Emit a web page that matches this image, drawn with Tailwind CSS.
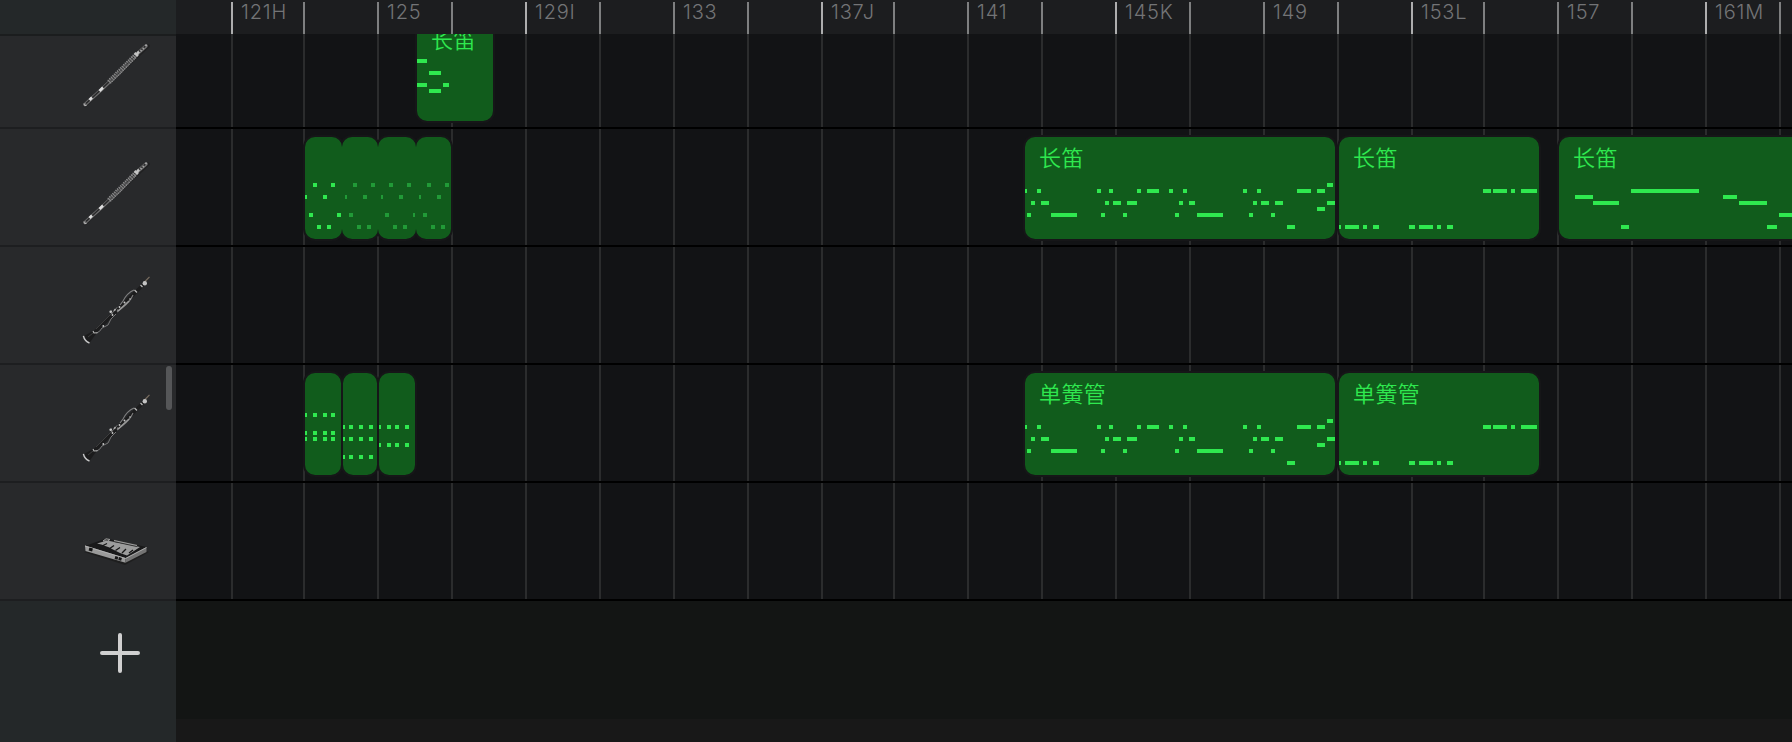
<!DOCTYPE html>
<html lang="zh-CN">
<head>
<meta charset="utf-8">
<title>Tracks</title>
<script src="https://cdn.jsdelivr.net/npm/@tailwindcss/browser@4"></script>
</head>
<body class="bg-[#121315] overflow-hidden">
<svg class="hidden">
  <symbol id="flute" viewBox="0 0 72 72">
    <path d="M5 65.5 68 6" stroke="#1b1b1c" stroke-width="3.5" stroke-linecap="round" opacity=".6"/>
    <path d="M5 64.5 21 50 40 32 57 14 66 6" stroke="#6c6c6d" stroke-width="3.6" fill="none" stroke-linecap="round"/>
    <path d="M6 63.5 21 49.5 40 31.500 57 13.500 66 5.500" stroke="#29292a" stroke-width="1.600" fill="none"/>
    <path d="M29 42 55 16" stroke="#8c8c8d" stroke-width="5" stroke-dasharray="1.200 1"/>
    <path d="M31 40.500 54 17.500" stroke="#4a4a4b" stroke-width="2.300" stroke-dasharray="1.500 1.200"/>
    <path d="M19.500 51 23 47.500M9.500 60 12 57.500" stroke="#dedede" stroke-width="2.600"/>
    <path d="M54.500 13 58 16M57 14 59 11.500" stroke="#c4c4c4" stroke-width="2.500"/>
    <path d="M60.500 11 65 7" stroke="#a0a0a0" stroke-width="2" stroke-dasharray="1.500 1.500"/>
    <circle cx="66" cy="5.500" r="1" fill="#aaa"/>
    <path d="M4 63.500Q4 66.500 6.500 65.500" stroke="#b4b4b4" fill="none"/>
  </symbol>
  <symbol id="clarinet" viewBox="0 0 72 72">
    <path d="M7 64 15 56 63 9" stroke="#1c1c1d" stroke-width="3.400" fill="none"/>
    <path d="M4 60 14 54.500 16.500 57 9.500 67Z" fill="#1b1b1c"/>
    <path d="M16 53 34 35M13 57 8 61" stroke="#4b4b4b" stroke-width=".7"/>
    <path d="M64 6.500 69.500 .8" stroke="#796d60" stroke-width="1.200"/>
    <circle cx="64.800" cy="7.300" r="2.200" fill="#c4c4c4"/>
    <path d="M60.500 9 62.500 11M54.500 14 57 16.500" stroke="#b8b8b8" stroke-width="1.300"/>
    <path d="M54 14Q47 17 43 25L40 29M53 19Q50 26 42 32L37 36" stroke="#7e7e7f" stroke-width="1.100" fill="none"/>
    <path d="M16.500 57Q20 56 22 52L28 49 31 43 36 38" stroke="#777778" stroke-width="1" fill="none"/>
    <path d="M38 35 49 25" stroke="#9c9c9c" stroke-width="1.400"/>
    <path d="M30 35.500 38 34M31.500 38 37 31.500" stroke="#a5a5a5" stroke-width="1" stroke-dasharray="2 1.500"/>
    <g fill="#cacaca"><circle cx="30.700" cy="35.700" r="1.300"/><circle cx="32.500" cy="39" r=".9"/><circle cx="35" cy="33.500" r=".8"/><circle cx="39.500" cy="31" r=".9"/><circle cx="44.500" cy="26.500" r="1"/><circle cx="50" cy="23" r=".8"/><circle cx="23.300" cy="50" r=".9"/></g>
    <path d="M13 55 14 57 17.500 56.800" stroke="#bdbdbd" stroke-width="1.100" fill="none"/>
    <path d="M3.400 59.800Q4.500 65 9.500 67" stroke="#c8c8c8" stroke-width="1.400" fill="none"/>
  </symbol>
  <symbol id="synth" viewBox="0 0 72 72">
    <path d="M4 40 45 53 69 40 60 36Z" fill="#19191a" opacity=".7"/>
    <path d="M5 34 26 26.500 66.500 35 45.500 46.500Z" fill="#19191a"/>
    <path d="M5 33.500 45.500 46V50.800L5.500 39Z" fill="#9a9a9a"/>
    <path d="M45.500 46 66.500 35V40L45.500 50.800Z" fill="#747474"/>
    <path d="M5 34 45.500 46.500 66.500 35.500" fill="none" stroke="#b9b9b9" stroke-width=".8"/>
    <path d="M17 31.500 27 28.500 60 35 47 43.500Q39 41 32 37 26 33.500 17 31.500Z" fill="#9c9c9c"/>
    <path d="M22 34 27 31.500M29 37 34 33.500M35.500 38.500 40 35.500M42 41 46 37M49 41 53 38" stroke="#161616" stroke-width="1.300"/>
    <path d="M34 28.800 57 33.800" stroke="#333" stroke-width="2.600"/>
    <path d="M34 28.500 57 33.500" stroke="#a0a0a0" stroke-width="1.200"/>
    <path d="M23 29 26 26.800 30 27.500 27.500 29Z" fill="#292929" stroke="#a0a0a0"/>
    <path d="M9 37 12.500 38" stroke="#111" stroke-width="3"/>
    <path d="M35 45.500 42 47.500" stroke="#151515" stroke-width="3" stroke-dasharray="3 .8"/>
  </symbol>
</svg>

<div class="flex w-[1792px] h-[742px] overflow-hidden">
  <aside class="relative w-[176px] shrink-0 flex flex-col bg-[#242829]">
    <div class="h-[36px] shrink-0 border-b-2 border-[#1b1d1e]"></div>
    <div class="h-[93px] shrink-0 flex items-end pl-20 pb-[15px] bg-[#28292b] border-b-2 border-[#1d1e20]"><svg class="size-[72px]"><use href="#flute"/></svg></div>
    <div class="h-[118px] shrink-0 flex items-end pl-20 pb-[15px] bg-[#28292b] border-b-2 border-[#1d1e20]"><svg class="size-[72px]"><use href="#flute"/></svg></div>
    <div class="h-[118px] shrink-0 flex items-end pl-20 pb-[15px] bg-[#28292b] border-b-2 border-[#1d1e20]"><svg class="size-[72px]"><use href="#clarinet"/></svg></div>
    <div class="h-[118px] shrink-0 flex items-end pl-20 pb-[15px] bg-[#28292b] border-b-2 border-[#1d1e20]"><svg class="size-[72px]"><use href="#clarinet"/></svg></div>
    <div class="h-[118px] shrink-0 flex items-end pl-20 pb-[15px] bg-[#28292b] border-b-2 border-[#1d1e20]"><svg class="size-[72px]"><use href="#synth"/></svg></div>
    <div class="pl-[100px] pt-[32px]">
      <svg class="size-[40px]" viewBox="0 0 40 40" stroke="#d0d0d0" stroke-width="4" stroke-linecap="round"><path d="M20 2V38M2 20H38"/></svg>
    </div>
    <div class="absolute left-[166px] top-[366px] w-[6px] h-[44px] rounded-full bg-[#555658]"></div>
  </aside>

  <main class="flex-1 min-w-0 flex flex-col">
    <div id="ruler" class="h-[34px] shrink-0 pt-0.5 pl-[55px] flex overflow-hidden bg-[#1c1d1f]"></div>
    <div class="relative h-[565px] shrink-0 overflow-hidden">
      <div id="grid" class="h-full pl-[55px] flex"></div>
      <div id="lanes" class="absolute inset-0"></div>
    </div>
    <div class="h-[120px] shrink-0 border-t-2 border-black bg-[#131514]"></div>
    <div class="flex-1 bg-[#181818]"></div>
  </main>
</div>

<script>
// Bar line positions; every fourth line starts a lettered section.
const lines = [231,303,377,451,525,599,673,747,821,893,967,1041,1115,1189,1263,1337,1411,1483,1557,1631,1705,1779,1853];
const labels = ['121H','','125','','129I','','133','','137J','','141','','145K','','149','','153L','','157','','161M',''];
let ruler = '', grid = '';
labels.forEach((t, i) => {
  const w = lines[i + 1] - lines[i];
  const tone = i % 4 === 0 ? 'border-[#adadae]' : 'border-[#7e7f80]';
  ruler += `<div class="shrink-0 border-l-2 ${tone} pl-2 text-[20px] leading-[20px] tracking-[0.8px] text-[#737476] font-[350] font-[Inter,sans-serif]" style="width:${w}px">${t}</div>`;
  grid += `<div class="shrink-0 h-full border-l-2 border-[#2b2c2d]" style="width:${w}px"></div>`;
});
document.getElementById('ruler').innerHTML = ruler;
document.getElementById('grid').innerHTML = grid;

// Notes: pitch offset -> [start, length] pairs.
const melody = {46:[[302,6]],
  52:[[0,2],[12,4],[72,4],[84,4],[112,4],[122,12],[144,4],[158,4],[218,4],[232,4],[272,14],[292,8]],
  64:[[6,4],[16,8],[80,4],[88,8],[102,10],[154,4],[164,6],[228,4],[236,8],[250,8],[302,8]],
  70:[[292,8]],
  76:[[2,4],[26,26],[76,4],[98,4],[150,4],[172,26],[224,4],[246,4]],
  88:[[262,8]]};
const answer = {52:[[144,8],[154,14],[172,4],[182,16]],
  88:[[0,2],[6,14],[24,4],[34,6],[70,6],[80,14],[98,4],[108,6]]};
const a = [[0,2],[8,4],[18,4],[26,4]], b = [[0,2],[6,4],[16,4],[26,4]], c = [[0,2],[8,4],[16,4],[26,4]];
const clips = [
  [417,19,76,'长笛',{40:[[0,10]],52:[[12,12]],64:[[0,10],[26,6]],70:[[12,12]]}],
  [305,137,37,'',{46:[[8,4],[26,4]],58:[[0,2],[18,4]],76:[[4,4],[32,4]],88:[[12,4],[22,4]]}],
  [342,137,36,'',{46:[[11,4],[29,4]],58:[[3,2],[21,4]],76:[[7,4]],88:[[15,4],[25,4]]},1],
  [378,137,38,'',{46:[[11,4],[29,4]],58:[[3,2],[21,4]],76:[[7,4],[35,2]],88:[[15,4],[25,4]]},1],
  [416,137,35,'',{46:[[11,4],[29,4]],58:[[3,2],[21,4]],76:[[7,4]],88:[[15,4],[25,4]]},1],
  [1025,137,310,'长笛',melody],
  [1339,137,200,'长笛',answer],
  [1559,137,320,'长笛',{52:[[72,68]],58:[[16,18],[164,14]],64:[[34,26],[180,28]],76:[[220,14]],88:[[62,8],[208,10]]}],
  [305,373,36,'',{40:a,58:a,64:a}],
  [343,373,34,'',{52:b,64:b,82:b}],
  [379,373,36,'',{52:c,70:c}],
  [1025,373,310,'单簧管',melody],
  [1339,373,200,'单簧管',answer]
];
let out = '';
for (const y of [93, 211, 329, 447]) out += `<div class="absolute inset-x-0 h-0.5 bg-black" style="top:${y}px"></div>`;
const box = ([x, y, w]) => `left:${x - 176}px;top:${y - 34}px;width:${w}px`;
for (const k of clips) out += `<div class="absolute h-[102px] rounded-[10px] ring-2 ring-[#161618]" style="${box(k)}"></div>`;
for (const k of clips) {
  let d = '';
  for (const y in k[4]) for (const [s, n] of k[4][y]) d += `M${s} ${y}h${n}v4h-${n}z`;
  out += `<div class="absolute h-[102px] rounded-[10px] overflow-hidden bg-[#115c1c]" style="${box(k)}">
    <svg class="absolute inset-0 size-full" fill="${k[5] ? '#219a37' : '#2fe84f'}"><path d="${d}"/></svg>
    <div class="pl-[14px] pt-[3px] text-[22px] leading-[32px] tracking-[0.4px] whitespace-nowrap text-[#2fe84f] font-[350] font-['Noto_Sans_CJK_SC',sans-serif]">${k[3]}</div></div>`;
}
document.getElementById('lanes').innerHTML = out;
</script>
</body>
</html>
